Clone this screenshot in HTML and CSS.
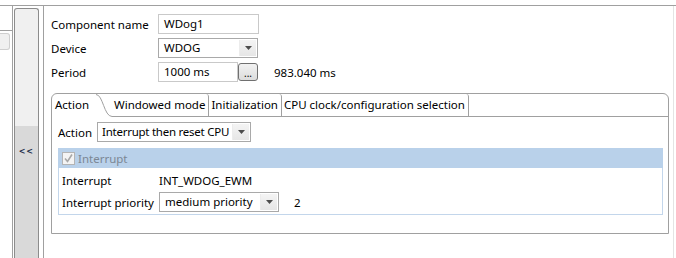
FILE: index.html
```html
<!DOCTYPE html>
<html lang="en">
<head>
  <meta charset="UTF-8">
  <title>WDog1 properties</title>
  <link rel="stylesheet" href="styles.css">
</head>
<body>
  <div class="window">
    <div class="left-panel">
      <div class="lp-top"></div>
      <div class="lp-btn"></div>
    </div>

    <div class="sash">
      <div class="sash-bar"><span class="sash-arrows">&lt;&lt;</span></div>
    </div>

    <div class="main">
      <div class="form">
        <span class="label">Component name</span>
        <div class="text-field name-field">WDog1</div>

        <span class="label">Device</span>
        <div class="combo device-combo">
          <span class="combo-value">WDOG</span>
          <span class="combo-arrow"><svg width="7" height="4" viewBox="0 0 7 4"><path d="M0 0H7L3.5 4Z" fill="#4d4d4d"/></svg></span>
        </div>

        <span class="label">Period</span>
        <div class="period-row">
          <div class="text-field period-field">1000 ms</div>
          <button class="dots-btn">...</button>
          <span class="period-value">983.040 ms</span>
        </div>
      </div>

      <div class="tabfolder">
        <div class="tabs">
          <div class="tab tab-active">
            <span class="tab-label">Action</span>
            <svg class="tab-curve" width="16" height="23" viewBox="0 0 16 23">
              <path d="M0 0.5C7 0.5 8 22.5 16 22.5" fill="none" stroke="#a0a0a0"/>
            </svg>
          </div>
          <div class="tab">Windowed mode</div>
          <div class="tab">Initialization</div>
          <div class="tab">CPU clock/configuration selection</div>
          <div class="tab-fill"></div>
        </div>

        <div class="tab-body">
          <div class="action-row">
            <span class="action-label">Action</span>
            <div class="combo action-combo">
              <span class="combo-value">Interrupt then reset CPU</span>
              <span class="combo-arrow"><svg width="7" height="4" viewBox="0 0 7 4"><path d="M0 0H7L3.5 4Z" fill="#4d4d4d"/></svg></span>
            </div>
          </div>

          <div class="group">
            <div class="group-head">
              <span class="checkbox">
                <svg width="11" height="11" viewBox="0 0 11 11"><path d="M2 5.5L4.5 8.5L9 1.5" fill="none" stroke="#a8a8a8" stroke-width="1.6"/></svg>
              </span>
              <span class="group-title">Interrupt</span>
            </div>
            <div class="group-body">
              <span class="label">Interrupt</span>
              <span class="value">INT_WDOG_EWM</span>

              <span class="label">Interrupt priority</span>
              <div class="priority-row">
                <div class="combo priority-combo">
                  <span class="combo-value">medium priority</span>
                  <span class="combo-arrow"><svg width="7" height="4" viewBox="0 0 7 4"><path d="M0 0H7L3.5 4Z" fill="#4d4d4d"/></svg></span>
                </div>
                <span class="priority-num">2</span>
              </div>
            </div>
          </div>
        </div>
      </div>
    </div>
  </div>
</body>
</html>
```

FILE: styles.css
```css
body {
  margin: 0;
  padding: 0;
  background: #fff;
  font-family: "Noto Sans", "Open Sans", sans-serif;
  font-size: 11.5px;
  color: #000;
  overflow: hidden;
}

.window {
  margin-top: 5px;
  border-top: 1px solid #a0a0a0;
  height: 252px;
  display: flex;
}

/* left (collapsed) panel */
.left-panel {
  width: 12px;
  border-right: 1px solid #a0a0a0;
}

.lp-top {
  height: 24px;
  border-bottom: 1px solid #a0a0a0;
}

.lp-btn {
  margin-top: 2px;
  width: 9px;
  height: 15px;
  background: #f0f0f0;
  border: 1px solid #cfcfcf;
  border-left: none;
  border-radius: 0 3px 3px 0;
}

/* sash with the collapse button */
.sash {
  width: 31px;
  padding: 2px 4px 0 1px;
  box-sizing: border-box;
}

.sash-bar {
  height: 100%;
  border: 1px solid #8c8c8c;
  border-bottom: none;
  border-radius: 3px 3px 0 0;
  background: linear-gradient(#f0f0f0 0, #f0f0f0 117px, #d9d9d9 117px);
  box-sizing: border-box;
  display: flex;
  justify-content: center;
  padding-top: 138px;
}

.sash-arrows {
  font-family: "DejaVu Sans", sans-serif;
  font-size: 8px;
  font-weight: bold;
  color: #1c2d4a;
  letter-spacing: 1px;
  line-height: 10px;
}

/* main area */
.main {
  flex: 1;
  border-left: 1px solid #a0a0a0;
  border-right: 1px solid #e4e4e4;
  margin-right: 2px;
  padding: 8px 4px 0 7px;
}

.form {
  display: grid;
  grid-template-columns: 107px auto;
  grid-auto-rows: 20px;
  row-gap: 4px;
  align-items: center;
}

.label {
  white-space: nowrap;
}

.text-field {
  height: 20px;
  box-sizing: border-box;
  border: 1px solid #c9c9c9;
  padding: 0 5px;
  line-height: 18px;
  background: #fff;
}

.name-field {
  width: 101px;
}

.combo {
  height: 20px;
  box-sizing: border-box;
  border: 1px solid #a9a9a9;
  display: flex;
  background: #fff;
}

.combo-value {
  flex: 1;
  padding-left: 5px;
  line-height: 18px;
  white-space: nowrap;
}

.combo-arrow {
  width: 16px;
  margin: 1px 1px 1px 0;
  background: linear-gradient(#f4f4f4, #e6e6e6);
  border-left: 1px solid #ececec;
  display: flex;
  align-items: center;
  justify-content: center;
}

.device-combo {
  width: 100px;
}

.period-row {
  display: flex;
  align-items: center;
  height: 20px;
}

.period-field {
  width: 80px;
}

.dots-btn {
  margin-left: 0;
  width: 20px;
  height: 18px;
  padding: 0;
  border: 1px solid #707070;
  border-radius: 3px;
  background: linear-gradient(#f2f2f2, #dcdcdc);
  font-family: inherit;
  font-size: 10px;
  line-height: 18px;
  color: #000;
}

.period-value {
  margin-left: 16px;
}

/* tab folder */
.tabfolder {
  margin-top: 11px;
  width: 618px;
  border: 1px solid #a0a0a0;
  border-radius: 6px 6px 0 0;
  box-sizing: border-box;
}

.tabs {
  display: flex;
  height: 23px;
}

.tab {
  height: 23px;
  box-sizing: border-box;
  padding: 0 3px 0 2px;
  line-height: 22px;
  border-bottom: 1px solid #a0a0a0;
  border-right: 1px solid #a0a0a0;
  border-top-right-radius: 3px;
  white-space: nowrap;
}

.tab-active {
  display: flex;
  padding: 0;
  border: none;
  border-radius: 5px 0 0 0;
}

.tab-label {
  width: 41px;
  padding-left: 3px;
}

.tab-curve {
  display: block;
}

.tab-fill {
  flex: 1;
  border-bottom: 1px solid #a0a0a0;
}

.tab-body {
  height: 111px;
  padding: 5px 5px 0 6px;
}

.action-row {
  display: flex;
  align-items: center;
}

.action-label {
  width: 39px;
}

.action-combo {
  width: 154px;
}

.action-combo .combo-value {
  padding-left: 4px;
  letter-spacing: -0.25px;
}

.group {
  margin-top: 6px;
}

.group-head {
  height: 20px;
  background: #b9d1ea;
  display: flex;
  align-items: center;
  padding-left: 4px;
}

.checkbox {
  width: 13px;
  height: 13px;
  box-sizing: border-box;
  border: 1px solid #b4b4b4;
  background: #f4f4f4;
  display: flex;
  align-items: center;
  justify-content: center;
}

.group-title {
  margin-left: 3px;
  color: #7c8794;
}

.group-body {
  border: 1px solid #c3d6eb;
  border-top: none;
  padding: 2px 0 2px 3px;
  display: grid;
  grid-template-columns: 97px auto;
  grid-auto-rows: 20px;
  row-gap: 2px;
  align-items: center;
}

.priority-row {
  display: flex;
  align-items: center;
}

.priority-combo {
  width: 120px;
}

.priority-num {
  margin-left: 15px;
}
```
